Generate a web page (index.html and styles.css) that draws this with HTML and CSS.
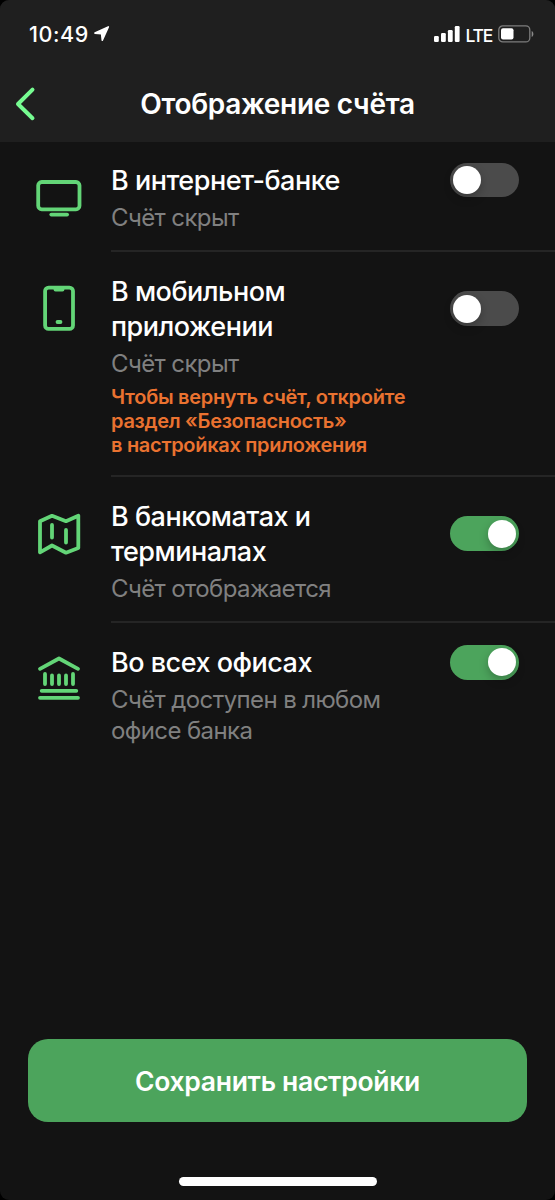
FILE: index.html
```html
<!DOCTYPE html>
<html lang="ru">
<head>
  <meta charset="UTF-8" />
  <meta name="viewport" content="width=device-width, initial-scale=1.0"/>
  <title>Отображение счёта</title>
  <link rel="stylesheet" href="styles.css">
</head>
<body>

  <div class="screen">
    <header class="header">
      <div class="status-bar">
        <span class="time">10:49</span>
        <svg class="location" width="16" height="16" viewBox="0 0 16 16">
          <path d="M14.3 .9 8.3 14.2 7.6 7.8 1 7.1Z" fill="#fff" stroke="#fff" stroke-width="1.6" stroke-linejoin="round"/>
        </svg>
        <svg class="signal" width="26" height="16" viewBox="0 0 26 16">
          <g fill="#fff">
            <rect x="0" y="10" width="4.8" height="6" rx="1.2"/>
            <rect x="7" y="7" width="4.8" height="9" rx="1.2"/>
            <rect x="13.9" y="4" width="4.8" height="12" rx="1.2"/>
            <rect x="20.8" y="0" width="4.8" height="16" rx="1.2"/>
          </g>
        </svg>
        <span class="network">LTE</span>
        <svg class="battery" width="36" height="18" viewBox="0 0 36 18">
          <rect x=".8" y=".9" width="31" height="16" rx="4" fill="none" stroke="#7d7d7d" stroke-width="1.3"/>
          <rect x="3" y="3.2" width="12.5" height="11.4" rx="2" fill="#fff"/>
          <path d="M33.7 6v6c2.2-1.2 2.2-4.8 0-6z" fill="#8a8a8a"/>
        </svg>
      </div>
      <div class="nav">
        <svg class="back" width="22" height="36" viewBox="0 0 22 36">
          <path d="M18.5 3.6 4 18l14.5 14.2" fill="none" stroke="#76fb91" stroke-width="4" stroke-linecap="round" stroke-linejoin="round"/>
        </svg>
        <h1 class="nav-title">Отображение счёта</h1>
      </div>
    </header>

    <main class="list">
      <div class="row">
        <svg class="icon" viewBox="0 0 52 52">
          <rect x="5.2" y="10" width="41.3" height="27.3" rx="3.5"/>
          <path d="M18.3 42.6h15.8"/>
        </svg>
        <div class="content">
          <div class="top">
            <div class="title">В интернет-банке</div>
            <div class="toggle"><div class="knob"></div></div>
          </div>
          <div class="subtitle">Счёт скрыт</div>
        </div>
      </div>

      <div class="row">
        <svg class="icon" viewBox="0 0 52 52">
          <rect x="12.1" y="4.6" width="27.9" height="41.3" rx="3.5"/>
          <path d="M22.5 6.5h7"/>
          <path d="M24.5 39h3"/>
        </svg>
        <div class="content">
          <div class="top">
            <div class="title">В мобильном<br>приложении</div>
            <div class="toggle"><div class="knob"></div></div>
          </div>
          <div class="subtitle">Счёт скрыт</div>
          <div class="warning">Чтобы вернуть счёт, откройте<br>раздел «Безопасность»<br>в настройках приложения</div>
        </div>
      </div>

      <div class="row">
        <svg class="icon" viewBox="0 0 52 52">
          <path d="M7 13.2 19 7.8 33 13.2 45.3 7.8V40L33 44.7 19 37.5 7 44.3Z"/>
          <path d="M19 17v12.5M33 22v12.5"/>
        </svg>
        <div class="content">
          <div class="top">
            <div class="title">В банкоматах и<br>терминалах</div>
            <div class="toggle on"><div class="knob"></div></div>
          </div>
          <div class="subtitle">Счёт отображается</div>
        </div>
      </div>

      <div class="row">
        <svg class="icon" viewBox="0 0 52 52">
          <path d="M7 14.8 26 4.5 45 14.8"/>
          <path d="M12 20v10M19 21.5V30M26 21.5V30M33 21.5V30M40 20v10"/>
          <path d="M8.7 36.8h34.6M7 43.8h38"/>
        </svg>
        <div class="content">
          <div class="top">
            <div class="title">Во всех офисах</div>
            <div class="toggle on"><div class="knob"></div></div>
          </div>
          <div class="subtitle">Счёт доступен в любом<br>офисе банка</div>
        </div>
      </div>
    </main>

    <footer class="footer">
      <button class="save">Сохранить настройки</button>
      <div class="home-indicator"></div>
    </footer>
  </div>

</body>
</html>
```
FILE: styles.css
```css
* {
  box-sizing: border-box;
}

body {
  margin: 0;
  background: #000;
  color: #fff;
  font-family: Inter, Roboto, sans-serif;
}

.screen {
  height: 1200px;
  display: flex;
  flex-direction: column;
  background: #131313;
  border-radius: 9px;
  overflow: hidden;
}

/* header */
.header {
  height: 142px;
  background: #1f1f1f;
}

.status-bar {
  display: flex;
  align-items: center;
  height: 68px;
  padding: 0 21px 0 29px;
}

.time {
  font-size: 21.5px;
  font-weight: 500;
  letter-spacing: 0.6px;
}

.location {
  margin-left: 5px;
}

.signal {
  margin-left: auto;
}

.network {
  margin: 2px 6px 0 5px;
  font-size: 17.5px;
  font-weight: 500;
  letter-spacing: -1.2px;
}

.nav {
  display: grid;
  grid-template-columns: 50px 1fr 50px;
  align-items: center;
  height: 72px;
}

.back {
  margin-left: 14px;
}

.nav-title {
  margin: 0;
  font-size: 28px;
  font-weight: 600;
  letter-spacing: -0.3px;
  text-align: center;
  white-space: nowrap;
}

/* settings list */
.list {
  flex: 1;
}

.row {
  display: flex;
  gap: 26px;
  padding-left: 33px;
}

.row:first-child {
  margin-top: -1px;
}

.icon {
  flex: none;
  width: 52px;
  height: 52px;
  margin-top: 31px;
  fill: none;
  stroke: #63d577;
  stroke-width: 3.8;
  stroke-linecap: round;
  stroke-linejoin: round;
}

.content {
  flex: 1;
  padding: 21.5px 36px 17.3px 0;
  border-bottom: 2px solid #252525;
}

.row:last-child .content {
  border-bottom: none;
}

.top {
  display: flex;
  justify-content: space-between;
  align-items: center;
}

.title {
  padding-top: 1.5px;
  font-size: 27px;
  font-weight: 500;
  line-height: 34.7px;
  letter-spacing: -0.5px;
}

.subtitle {
  margin-top: 3.3px;
  font-size: 24px;
  line-height: 31px;
  letter-spacing: -0.6px;
  color: #808080;
}

.warning {
  margin: 5.5px 0 0.8px;
  font-size: 20px;
  font-weight: 600;
  line-height: 24.3px;
  letter-spacing: -0.3px;
  color: #ea7230;
}

/* toggle */
.toggle {
  flex: none;
  display: flex;
  width: 69px;
  height: 34.6px;
  padding: 3.3px;
  margin-bottom: 1.5px;
  border-radius: 18px;
  background: #4b4b4b;
}

.toggle.on {
  justify-content: flex-end;
  background: #4ca45c;
}

.knob {
  width: 28px;
  height: 28px;
  border-radius: 50%;
  background: #fff;
  box-shadow: 0 4px 10px rgba(0,0,0,0.25);
}

/* bottom */
.footer {
  display: flex;
  flex-direction: column;
  align-items: center;
  padding: 0 28px 14px;
}

.save {
  width: 100%;
  height: 83px;
  padding: 0;
  border: none;
  border-radius: 20px;
  background: #4ca45c;
  color: #fff;
  font-family: inherit;
  font-size: 26.5px;
  font-weight: 600;
  letter-spacing: -0.3px;
}

.home-indicator {
  width: 198px;
  height: 9px;
  margin-top: 55px;
  border-radius: 5px;
  background: #fff;
}
```
